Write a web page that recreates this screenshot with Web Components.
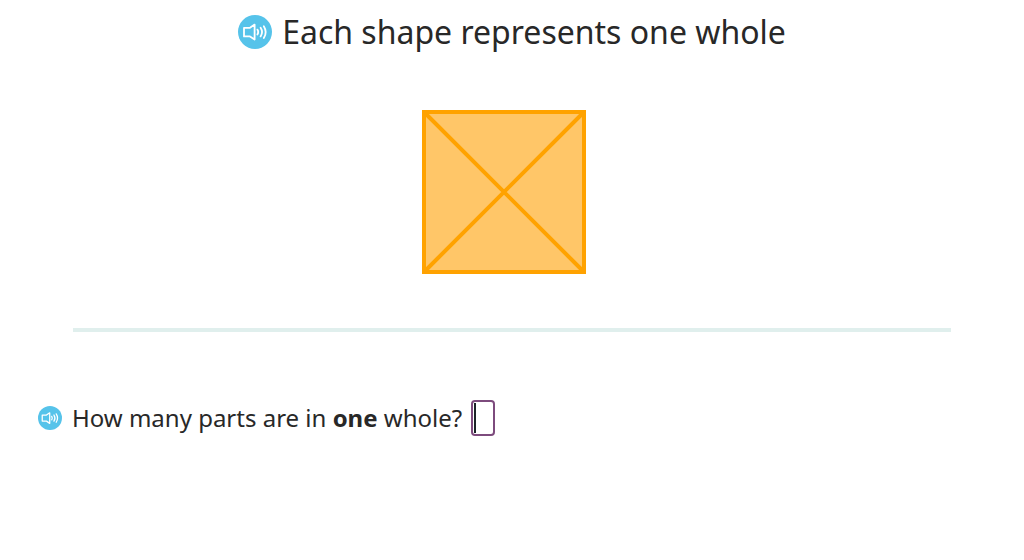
<!DOCTYPE html>
<html lang="en">
<head>
<meta charset="utf-8">
<meta name="viewport" content="width=device-width, initial-scale=1">
<title>Fractions</title>
<style>
  body { margin: 0; background: #fff; color: #282828; font-family: "Noto Sans", "Open Sans", sans-serif; }
</style>
</head>
<body>
<fraction-exercise>
  <prompt-heading slot="heading">Each shape represents one whole</prompt-heading>
  <whole-shape slot="figure"></whole-shape>
  <question-row slot="question">How many parts are in <b>one</b> whole?</question-row>
</fraction-exercise>

<script>
  function attach(el, html) {
    const root = el.attachShadow({ mode: "open" });
    root.innerHTML = html;
    return root;
  }

  customElements.define("audio-button", class extends HTMLElement {
    constructor() {
      super();
      attach(this, `
        <style>
          :host { display: block; flex: none; width: var(--audio-size, 24px); height: var(--audio-size, 24px); }
          button { display: block; width: 100%; height: 100%; margin: 0; padding: 0; border: 0; border-radius: 50%; background: #56c3ea; cursor: pointer; }
          svg { display: block; width: 100%; height: 100%; fill: none; stroke: #fff; stroke-width: 1.8; stroke-linejoin: round; stroke-linecap: round; }
        </style>
        <button type="button" aria-label="Read aloud">
          <svg viewBox="0 0 34 34" aria-hidden="true">
            <path d="M12 12.8H6v8.6h6L16.6 24.6V9.6L12 12.8"/>
            <path d="M19.4 14.6q1.7 2.5 0 5M22.6 12.8q2.9 4.3 0 8.6M25.8 11.2q3.8 5.9 0 11.8"/>
          </svg>
        </button>`);
    }
  });

  customElements.define("prompt-heading", class extends HTMLElement {
    constructor() {
      super();
      attach(this, `
        <style>
          :host { display: flex; justify-content: center; align-items: center; gap: 10px; --audio-size: 34px; }
          h1 { margin: 0; font-size: 32px; line-height: 44px; font-weight: 400; }
        </style>
        <audio-button></audio-button>
        <h1><slot></slot></h1>`);
    }
  });

  customElements.define("whole-shape", class extends HTMLElement {
    constructor() {
      super();
      attach(this, `
        <style>
          :host { display: flex; justify-content: center; padding-right: 16px; }
          svg { display: block; width: 164px; height: 164px; fill: #ffc668; stroke: #ffa200; stroke-width: 4; }
        </style>
        <svg viewBox="0 0 164 164" role="img" aria-label="Square divided into four triangles">
          <rect x="2" y="2" width="160" height="160"/>
          <path d="M2 2L162 162M162 2L2 162"/>
        </svg>`);
    }
  });

  customElements.define("question-row", class extends HTMLElement {
    constructor() {
      super();
      attach(this, `
        <style>
          :host { display: flex; align-items: center; gap: 10px; --audio-size: 24px; }
          .line { display: flex; align-items: center; gap: 9px; font-size: 24px; line-height: 36px; }
          input {
            box-sizing: border-box; width: 24px; height: 36px; margin: 0; padding: 1px;
            border: 2px solid #7d4b7d; border-radius: 4px; outline: none; font: inherit; color: inherit;
            caret-color: transparent;
            background: linear-gradient(#1c2429, #1c2429) 1px center / 2px 30px no-repeat #fff;
          }
        </style>
        <audio-button></audio-button>
        <div class="line">
          <label for="answer"><slot></slot></label>
          <input id="answer" type="text" inputmode="numeric" autocomplete="off">
        </div>`);
    }
  });

  customElements.define("fraction-exercise", class extends HTMLElement {
    constructor() {
      super();
      attach(this, `
        <style>
          :host { display: block; }
          main { display: flex; flex-direction: column; padding: 10px 38px 40px; }
          .figure { margin-top: 56px; }
          hr { width: auto; margin: 54px 35px 68px; border: 0; height: 4px; background: #e0efed; }
        </style>
        <main>
          <slot name="heading"></slot>
          <div class="figure"><slot name="figure"></slot></div>
          <hr>
          <slot name="question"></slot>
        </main>`);
    }
  });
</script>
</body>
</html>
